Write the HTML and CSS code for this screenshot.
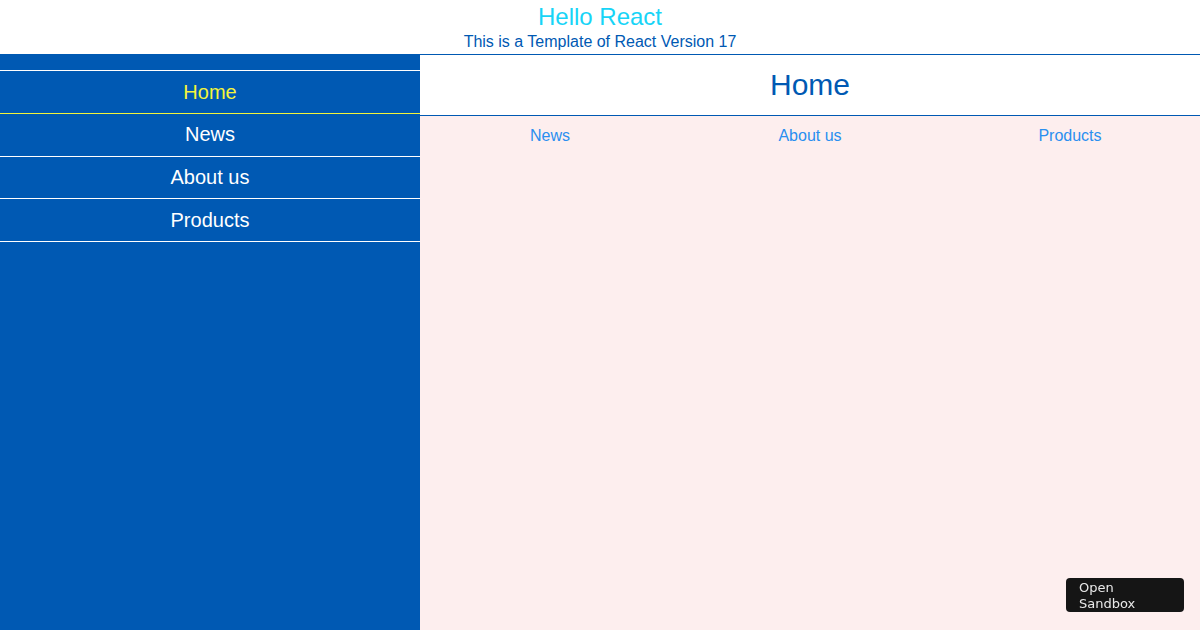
FILE: index.html
```html
<!DOCTYPE html>
<html>
<head>
<meta charset="utf-8">
<link rel="stylesheet" href="styles.css">
</head>
<body>
<header class="header">
  <h1 class="title">Hello React</h1>
  <p class="subtitle">This is a Template of React Version 17</p>
</header>
<div class="layout">
  <nav class="sidebar">
    <ul class="menu">
      <li class="menu-item active">Home</li>
      <li class="menu-item">News</li>
      <li class="menu-item">About us</li>
      <li class="menu-item">Products</li>
    </ul>
  </nav>
  <main class="main">
    <h2 class="page-title">Home</h2>
    <div class="links">
      <a class="link">News</a>
      <a class="link">About us</a>
      <a class="link">Products</a>
    </div>
  </main>
</div>
<div class="sandbox-btn"><span class="sb-line">Open</span><span class="sb-line">Sandbox</span></div>
</body>
</html>
```
FILE: styles.css
```css
html, body {
  margin: 0;
  padding: 0;
  height: 100%;
}
body {
  font-family: "Liberation Sans", Arial, sans-serif;
  background: #ffffff;
  display: flex;
  flex-direction: column;
}
.header {
  text-align: center;
  padding: 3px 0 2px;
  border-bottom: 1px solid #0059b3;
}
.title {
  margin: 0;
  font-size: 24px;
  line-height: 27px;
  font-weight: normal;
  color: #17d4f7;
}
.subtitle {
  margin: 2px 0 0;
  font-size: 16px;
  line-height: 20px;
  color: #0059b3;
}
.layout {
  flex: 1;
  display: flex;
}
.sidebar {
  width: 420px;
  background: #0059b3;
  padding-top: 15px;
}
.menu {
  list-style: none;
  margin: 0;
  padding: 0;
  border-top: 1px solid #ffffff;
}
.menu-item {
  height: 41.25px;
  padding-top: 0.5px;
  line-height: 41.25px;
  font-size: 20px;
  color: #ffffff;
  text-align: center;
  border-bottom: 1px solid #ffffff;
}
.menu-item.active {
  color: #f4f43a;
  border-bottom-color: #f4f43a;
}
.main {
  flex: 1;
  display: flex;
  flex-direction: column;
  background: #fdeeee;
}
.page-title {
  margin: 0;
  height: 60px;
  line-height: 60px;
  font-size: 30px;
  font-weight: normal;
  color: #0059b3;
  text-align: center;
  background: #ffffff;
  border-bottom: 1px solid #0059b3;
}
.links {
  display: grid;
  grid-template-columns: 1fr 1fr 1fr;
  padding-top: 11px;
}
.link {
  text-align: center;
  font-size: 16px;
  line-height: 18px;
  color: #2a8ff0;
}
.sandbox-btn {
  position: fixed;
  right: 16px;
  bottom: 18px;
  width: 118px;
  height: 34px;
  box-sizing: border-box;
  padding: 2px 13px 0;
  background: #151515;
  border-radius: 4px;
  font-family: "DejaVu Sans", Verdana, sans-serif;
  font-size: 13px;
  line-height: 16px;
  color: #e8e8e8;
}
.sb-line {
  display: block;
}
```
